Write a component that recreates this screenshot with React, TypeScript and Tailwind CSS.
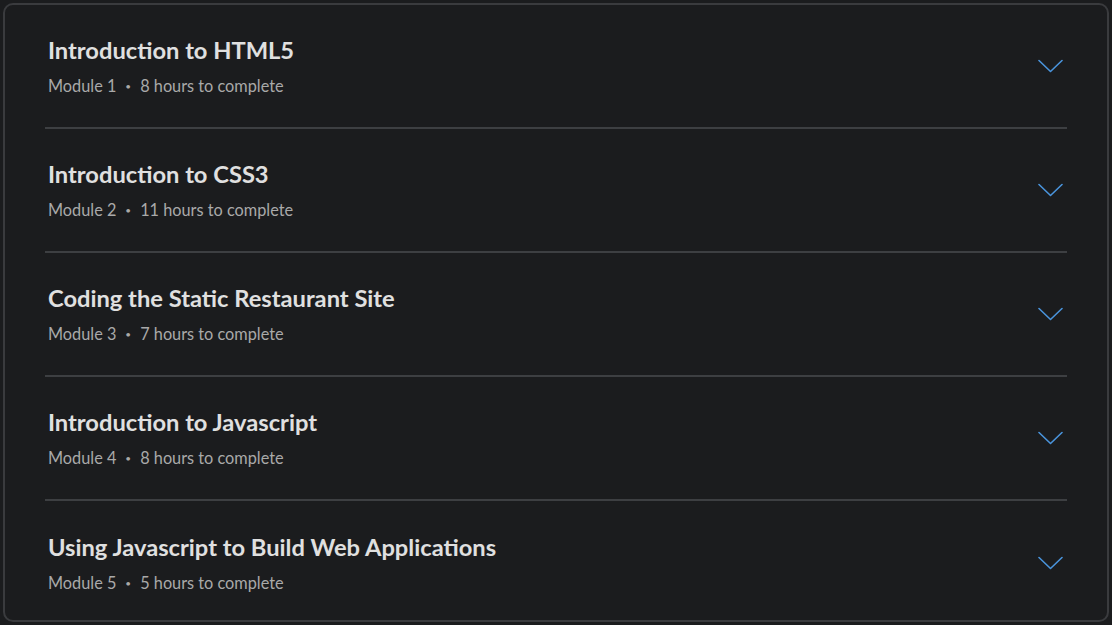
import React from "react";

const modules = [
  { title: "Introduction to HTML5", n: 1, hours: 8 },
  { title: "Introduction to CSS3", n: 2, hours: 11 },
  { title: "Coding the Static Restaurant Site", n: 3, hours: 7 },
  { title: "Introduction to Javascript", n: 4, hours: 8 },
  { title: "Using Javascript to Build Web Applications", n: 5, hours: 5 },
];

function Chevron() {
  return (
    <svg width="25" height="14" viewBox="0 0 25 14" fill="none" className="text-[#4a94dc]">
      <path d="M1 1.5 L12.5 12.5 L24 1.5" stroke="currentColor" strokeWidth="1.6" strokeLinecap="round" strokeLinejoin="round" />
    </svg>
  );
}

export default function App() {
  return (
    <div className="w-[1112px] h-[625px] bg-[#1b1c1e] p-[3px] font-['Lato','Noto_Sans',sans-serif]">
      <div className="h-full rounded-[10px] border-2 border-[#3a3b3e] bg-[#1b1c1e] px-[40px]">
        {modules.map((m, i) => (
          <div
            key={m.n}
            className={`flex h-[124px] items-center justify-between pl-[3px] pr-[4px] ${i < modules.length - 1 ? "border-b-2 border-[#3d3f42]" : ""}`}
          >
            <div className="flex flex-col">
              <h3 className="text-[23.7px] leading-[30px] font-bold text-[#e0e0e0]">{m.title}</h3>
              <p className="mt-[10px] flex items-center text-[16.3px] leading-[22px] text-[#a9a9a9]">
                <span>Module {m.n}</span>
                <span className="mx-[9px] text-[10px]">•</span>
                <span>{m.hours} hours to complete</span>
              </p>
            </div>
            <Chevron />
          </div>
        ))}
      </div>
    </div>
  );
}
